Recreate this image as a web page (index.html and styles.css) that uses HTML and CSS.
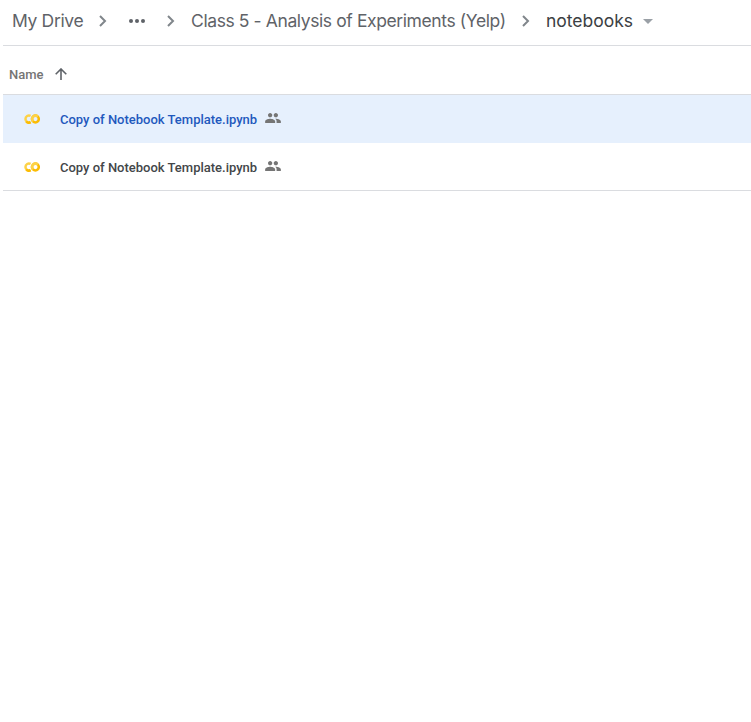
FILE: index.html
```html
<!DOCTYPE html>
<html lang="en">
<head>
<meta charset="utf-8">
<title>notebooks</title>
<link rel="stylesheet" href="styles.css">
</head>
<body>
<svg width="0" height="0" class="defs">
  <symbol id="chevron" viewBox="0 0 8 12"><path d="M1 1l5 5-5 5" fill="none" stroke="#80868b" stroke-width="2"/></symbol>
  <symbol id="colab" viewBox="0 0 16 10">
    <path d="M6.600 1.900A3.500 3.500 0 1 0 6.600 8.100" fill="none" stroke="#fdd247" stroke-width="2.500"/>
    <path d="M2.200 7.500A3.500 3.500 0 0 0 6.600 8.100" fill="none" stroke="#fbbc04" stroke-width="2.500"/>
    <circle cx="11.400" cy="5" r="3.400" fill="none" stroke="#fbbc04" stroke-width="2.500"/>
    <path d="M9 7.400A3.400 3.400 0 0 1 13.800 2.600" fill="none" stroke="#fdd247" stroke-width="2.500"/>
  </symbol>
  <symbol id="people" viewBox="1 5 22 14"><path d="M16 11c1.66 0 2.99-1.34 2.99-3S17.66 5 16 5s-3 1.34-3 3 1.34 3 3 3zm-8 0c1.66 0 2.99-1.34 2.99-3S9.66 5 8 5 5 6.34 5 8s1.34 3 3 3zm0 2c-2.33 0-7 1.17-7 3.500V19h14v-2.500c0-2.330-4.670-3.500-7-3.500zm8 0c-.29 0-.62.020-.97.050 1.160.840 1.970 1.970 1.970 3.450V19h6v-2.500c0-2.330-4.670-3.500-7-3.500z"/></symbol>
</svg>
<main class="drive">
  <nav class="crumbs">
    <span class="crumb root">My Drive</span>
    <svg class="chevron first"><use href="#chevron"/></svg>
    <svg class="more" viewBox="0 0 16 4"><circle cx="2" cy="2" r="2"/><circle cx="8" cy="2" r="2"/><circle cx="14" cy="2" r="2"/></svg>
    <svg class="chevron second"><use href="#chevron"/></svg>
    <span class="crumb parent">Class 5 - Analysis of Experiments (Yelp)</span>
    <svg class="chevron third"><use href="#chevron"/></svg>
    <span class="crumb current">notebooks</span>
    <svg class="caret" viewBox="0 0 10 5"><path d="M0 0h10L5 5z"/></svg>
  </nav>
  <div class="head">
    <span>Name</span>
    <svg class="arrow" viewBox="0 0 12 12"><path d="M6 12V1M.7 6.300 6 1l5.300 5.300"/></svg>
  </div>
  <div class="row selected">
    <svg class="colab"><use href="#colab"/></svg>
    <span class="file">Copy of Notebook Template.ipynb</span>
    <svg class="people"><use href="#people"/></svg>
  </div>
  <div class="row">
    <svg class="colab"><use href="#colab"/></svg>
    <span class="file">Copy of Notebook Template.ipynb</span>
    <svg class="people"><use href="#people"/></svg>
  </div>
</main>
</body>
</html>
```
FILE: styles.css
```css
* { box-sizing: border-box; }
body { margin: 0; background: #fff; font-family: Roboto, sans-serif; }
.defs { position: absolute; }
svg { flex: none; }
.drive { margin-left: 3px; }
.crumbs {
  display: flex;
  align-items: center;
  height: 46px;
  padding: 0 0 3px 9px;
  border-bottom: 1px solid #dadce0;
  font: 400 17.5px/24px Inter, sans-serif;
  color: #5f6368;
  white-space: nowrap;
}
.crumb { flex: none; }
.root { width: 71px; letter-spacing: -0.35px; }
.parent { width: 315px; letter-spacing: -0.4px; }
.current { width: 87px; color: #3c4043; letter-spacing: -0.02px; }
.chevron { width: 8px; height: 12px; }
.first { margin: 0 22px 0 16px; }
.more { width: 16px; height: 4px; margin-right: 22px; fill: #5f6368; }
.second { margin-right: 16px; }
.third { margin: 0 16px; }
.caret { width: 10px; height: 5px; margin-left: 10px; fill: #9aa0a6; }
.head {
  display: flex;
  align-items: center;
  height: 49px;
  padding: 8px 0 0 6px;
  border-bottom: 1px solid #dadce0;
  font-size: 13px;
  font-weight: 500;
  color: #80868b;
}
.head span { width: 46px; padding-top: 1px; color: #757575; }
.arrow { width: 12px; height: 12px; fill: none; stroke: #5f6368; stroke-width: 1.6; }
.row {
  display: flex;
  align-items: center;
  height: 48px;
  padding: 1px 0 0 21px;
  border-bottom: 1px solid #dadce0;
  font-size: 13px;
  font-weight: 500;
  color: #434649;
}
.selected { background: #e6f0fd; border-bottom-color: #e6f0fd; color: #1f59bd; }
.colab { width: 16px; height: 10px; }
.file { width: 197px; margin-left: 20px; padding-top: 1px; white-space: nowrap; }
.people { width: 16px; height: 10px; margin: 0 0 2px 8px; fill: #757575; }
```
